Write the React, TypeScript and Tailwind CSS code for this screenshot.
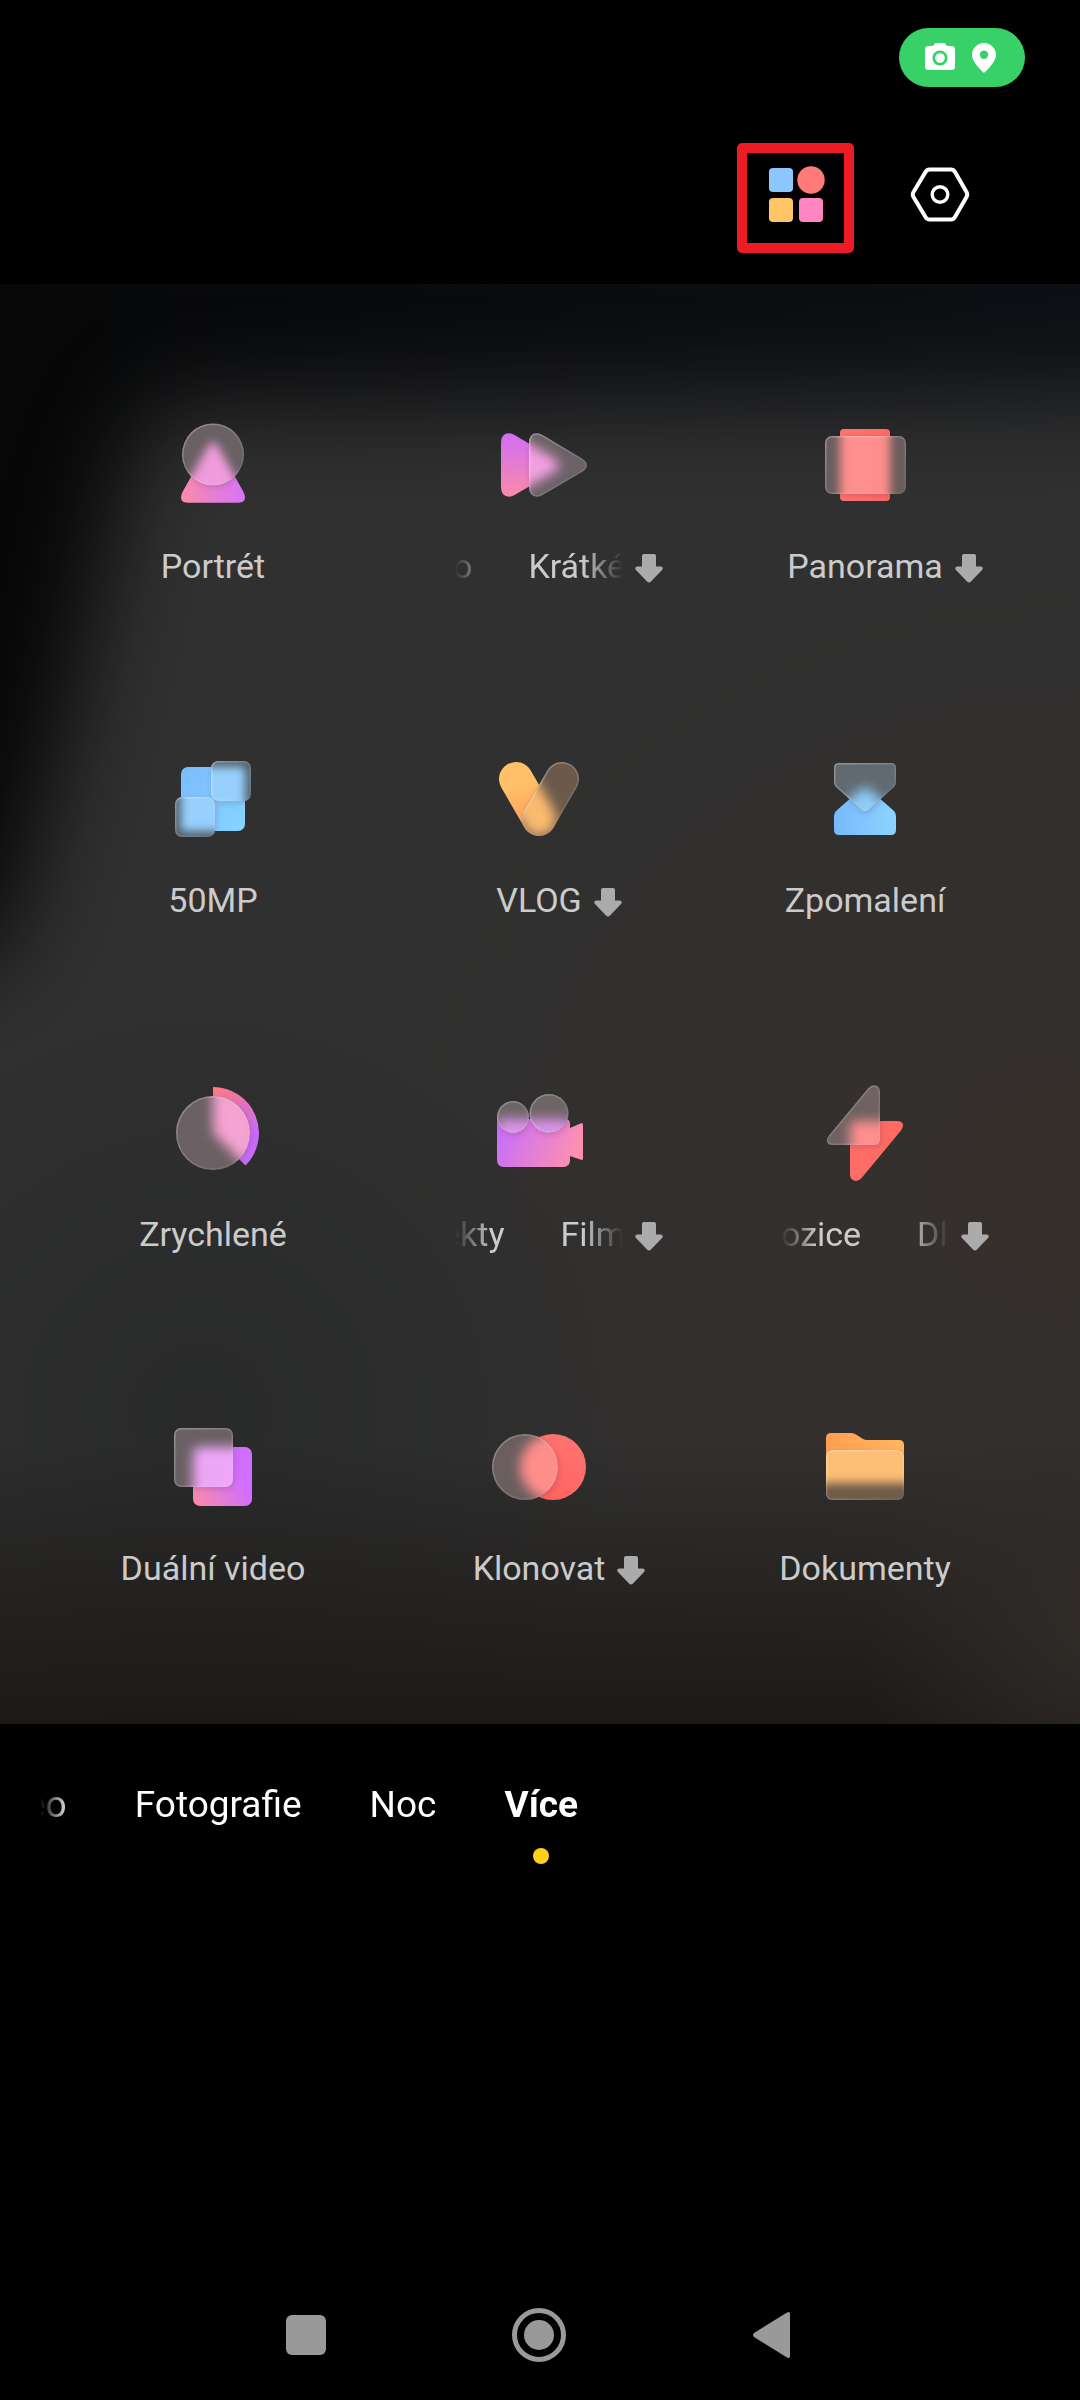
import { useId, useState, type ReactNode } from 'react';
import { MdCameraAlt } from 'react-icons/md';

type Mode = {
  id: string;
  icon: ReactNode;
  label?: string;
  // labels that are too long scroll; tail and head are the two visible ends
  marquee?: { tail: string; head: string; scroll: number };
  download?: boolean;
};

type GlassProps = {
  shape: ReactNode;
  under: ReactNode;
  tint: string;
  glow: string;
  blur?: number;
};

// Frosted shape: tinted base, blurred copy of what lies below, thin light rim
function Glass({ shape, under, tint, glow, blur = 6 }: GlassProps) {
  const id = useId().replace(/[^a-zA-Z0-9]/g, '');
  return (
    <>
      <defs>
        <clipPath id={`c${id}`}>{shape}</clipPath>
        <filter id={`b${id}`} x="-40%" y="-40%" width="180%" height="180%" colorInterpolationFilters="sRGB">
          <feGaussianBlur stdDeviation={blur} />
        </filter>
        <linearGradient id={`r${id}`} x1="0" y1="0" x2="1" y2="1">
          <stop offset="0" stopColor="#fff" stopOpacity="0.3" />
          <stop offset="1" stopColor="#fff" stopOpacity="0.03" />
        </linearGradient>
      </defs>
      <g fill={tint}>{shape}</g>
      <g clipPath={`url(#c${id})`}>
        <g fill={glow} filter={`url(#b${id})`}>{under}</g>
        <g fill="none" stroke={`url(#r${id})`} strokeWidth="3">{shape}</g>
      </g>
    </>
  );
}

type IconProps = {
  from: string;
  to: string;
  dir?: [number, number, number, number];
  under: ReactNode;
  glass: ReactNode[];
  tint: string;
  glow: string;
  blur?: number;
  glowShape?: ReactNode;
};

function ModeIcon({ from, to, dir = [0, 0, 1, 0], under, glass, tint, glow, blur, glowShape }: IconProps) {
  const id = useId().replace(/[^a-zA-Z0-9]/g, '');
  const [x1, y1, x2, y2] = dir;
  return (
    <svg viewBox="0 0 120 120" className="size-[120px]" aria-hidden="true">
      <defs>
        <linearGradient id={`g${id}`} gradientUnits="userSpaceOnUse" x1={x1 * 80 + 20} y1={y1 * 80 + 20} x2={x2 * 80 + 20} y2={y2 * 80 + 20}>
          <stop offset="0" stopColor={from} />
          <stop offset="1" stopColor={to} />
        </linearGradient>
        <clipPath id={`u${id}`}>{under}</clipPath>
        <filter id={`s${id}`} x="-40%" y="-40%" width="180%" height="180%">
          <feGaussianBlur stdDeviation="3" />
        </filter>
      </defs>
      <g fill={`url(#g${id})`}>{under}</g>
      {/* shade that the glass casts on the shape below */}
      <g clipPath={`url(#u${id})`}>
        <g fill="#5a2050" opacity="0.2" filter={`url(#s${id})`} transform="translate(1 2)">
          {glass.map((shape, i) => <g key={i}>{shape}</g>)}
        </g>
      </g>
      {glass.map((shape, i) => (
        <Glass key={i} shape={shape} under={glowShape ?? under} tint={tint} glow={glow} blur={blur} />
      ))}
    </svg>
  );
}

const boltPath =
  'M63 15.5Q67 11 71 12.5Q75 14 75 19V67Q75 72 70 72H27.5Q23 72 22 68.5Q21.5 66 24 62.5Z';
const playPath =
  'M50 38Q50 28.3 58 28.3Q61 28.3 64 30.2L103 53.5Q108 56.8 108 60.2Q108 63.8 103 67L64 89.8Q61 91.7 58 91.7Q50 91.7 50 82Z';

const modes: Mode[] = [
  {
    id: 'portrait',
    label: 'Portrét',
    icon: (
      <ModeIcon
        from="#ff8ea4" to="#d272ff" tint="#696164" glow="#f09bdc" blur={5}
        under={<path d="M54 43Q60 32 66 43L90.5 87Q95 97.7 85 97.7H35Q25 97.7 29.5 87Z" />}
        glass={[<circle cx="60" cy="49.5" r="31" />]}
      />
    ),
  },
  {
    id: 'short',
    marquee: { tail: 'o', head: 'Krátké', scroll: 2 },
    download: true,
    icon: (
      <ModeIcon
        from="#cb6aff" to="#ff8f9f" dir={[0, 0, 0, 1]} tint="#6b6266" glow="#f2a0e0"
        under={<path d={playPath} transform="translate(-28 0)" />}
        glass={[<path d={playPath} />]}
      />
    ),
  },
  {
    id: 'panorama',
    label: 'Panorama',
    download: true,
    icon: (
      <ModeIcon
        from="#ff7874" to="#ff6460" tint="#6a5e5f" glow="#ff8f8d" blur={5}
        under={<rect x="35" y="24" width="50" height="72" rx="4" />}
        glowShape={<rect x="35" y="4" width="50" height="112" />}
        glass={[<rect x="20" y="31" width="81" height="58" rx="7" />]}
      />
    ),
  },
  {
    id: '50mp',
    label: '50MP',
    icon: (
      <ModeIcon
        from="#78b9ff" to="#8ad8ff" dir={[0, 0, 1, 1]} tint="#54626c" glow="#97d0fd" blur={4}
        under={<rect x="28" y="28" width="64" height="64" rx="7" />}
        glowShape={<rect x="28" y="28" width="64" height="64" rx="4" />}
        glass={[
          <rect x="58" y="22" width="40" height="40" rx="7" />,
          <rect x="22" y="58" width="40" height="40" rx="7" />,
        ]}
      />
    ),
  },
  {
    id: 'vlog',
    label: 'VLOG',
    download: true,
    icon: (
      <ModeIcon
        from="#ffc068" to="#ff8a50" dir={[0.4, 0, 0.2, 0.8]} tint="#6b5a4c" glow="#f9bb70"
        under={<rect x="-17" y="-17" width="34" height="80" rx="17" transform="translate(37 40) rotate(-30)" />}
        glass={[<rect x="-17" y="-17" width="34" height="80" rx="17" transform="translate(83 40) rotate(30)" />]}
      />
    ),
  },
  {
    id: 'slow',
    label: 'Zpomalení',
    icon: (
      <ModeIcon
        from="#74b5ff" to="#8fd8ff" tint="#606a70" glow="#8ecbf8"
        under={<path d="M56 50Q60 46 64 50L89 72Q91 74 91 77V91Q91 96 86 96H34Q29 96 29 91V77Q29 74 31 72Z" />}
        glass={[<path d="M34 24H86Q91 24 91 29V43Q91 46 89 48L64 70.5Q60 74.5 56 70.5L31 48Q29 46 29 43V29Q29 24 34 24Z" />]}
      />
    ),
  },
  {
    id: 'timelapse',
    label: 'Zrychlené',
    icon: (
      <ModeIcon
        from="#ff7a84" to="#c86cf8" dir={[0.45, 0, 0.9, 0.6]} tint="#6b6164" glow="#f5a3d2"
        under={<path d="M60 60V14A46 46 0 0 1 92.5 92.5Z" />}
        glass={[<circle cx="60" cy="60" r="37" />]}
      />
    ),
  },
  {
    id: 'movie',
    marquee: { tail: 'ekty', head: 'Film', scroll: 13 },
    download: true,
    icon: (
      <ModeIcon
        from="#c46cff" to="#ff90b0" dir={[0, 0.3, 1, 0.7]} tint="#6e6567" glow="#d993e8"
        under={
          <path d="M18 46H86Q91 46 91 51V55L102 50.2Q104 49.6 104 52V85Q104 87.5 102 86.7L91 83V87Q91 94 84 94H25Q18 94 18 87Z" />
        }
        glass={[<circle cx="34" cy="44" r="16" />, <circle cx="70" cy="40.5" r="19.5" />]}
      />
    ),
  },
  {
    id: 'exposure',
    marquee: { tail: 'ozice', head: 'Dl', scroll: 0 },
    download: true,
    icon: (
      <ModeIcon
        from="#ff6a62" to="#ff6f6c" tint="#706163" glow="#fd8f8d"
        under={<path d={boltPath} transform="rotate(180 60 60)" />}
        glass={[<path d={boltPath} />]}
      />
    ),
  },
  {
    id: 'dual',
    label: 'Duální video',
    icon: (
      <ModeIcon
        from="#ff8e9e" to="#d06eff" dir={[0.2, 1, 0.9, 0.7]} tint="#6a6164" glow="#eda6f8"
        under={<rect x="40" y="40" width="59" height="59" rx="7" />}
        glass={[<rect x="21" y="21" width="59" height="59" rx="7" />]}
      />
    ),
  },
  {
    id: 'clone',
    label: 'Klonovat',
    download: true,
    icon: (
      <ModeIcon
        from="#ff6460" to="#ff7774" dir={[0.5, 0.8, 1, 0]} tint="#6b5e5f" glow="#ff8e8b"
        under={<circle cx="74" cy="60" r="33" />}
        glass={[<circle cx="46" cy="60" r="33" />]}
      />
    ),
  },
  {
    id: 'documents',
    label: 'Dokumenty',
    icon: (
      <ModeIcon
        from="#ff9d52" to="#ffb860" tint="#705c4b" glow="#fdbf76" blur={5}
        under={<path d="M26 26H46Q49 26 51 27.5L58 32Q60 33 62 33H94Q99 33 99 38V62H21V31Q21 26 26 26Z" />}
        glowShape={<rect x="4" y="26" width="112" height="50" />}
        glass={[<rect x="21" y="43" width="78" height="50" rx="6" />]}
      />
    ),
  },
];

function DownloadArrow() {
  return (
    <svg viewBox="0 0 28 30" className="absolute left-full top-[7px] ml-3 h-[30px] w-7" aria-hidden="true">
      <path
        d="M9 1H19Q21 1 21 3V13.5H26Q29 14.5 27 17L16 28.5Q14 30.5 12 28.5L1 17Q-1 14.5 2 13.5H7V3Q7 1 9 1Z"
        fill="#ababab"
      />
    </svg>
  );
}

function ModeButton({ mode }: { mode: Mode }) {
  return (
    <button type="button" className="flex flex-col items-center gap-[21px]">
      {mode.icon}
      <span className="relative text-[34px] leading-10 whitespace-nowrap text-[#cbcbcb]">
        {mode.marquee ? (
          <span className="block w-[168px] overflow-hidden mask-[linear-gradient(90deg,transparent,#000_36px,#000_calc(100%-40px),transparent)]">
            <span className="flex gap-14" style={{ marginLeft: -mode.marquee.scroll }}>
              <span>{mode.marquee.tail}</span>
              <span>{mode.marquee.head}</span>
            </span>
          </span>
        ) : (
          mode.label
        )}
        {mode.download && <DownloadArrow />}
      </span>
    </button>
  );
}

// Out-of-focus viewfinder behind the mode grid
function Viewfinder() {
  return (
    <svg
      viewBox="0 0 1080 1440"
      preserveAspectRatio="none"
      className="col-start-1 row-start-1 h-full w-full"
      aria-hidden="true"
    >
      <defs>
        <filter id="soft" x="-30%" y="-30%" width="160%" height="160%" colorInterpolationFilters="sRGB">
          <feGaussianBlur stdDeviation="46" />
        </filter>
        <radialGradient id="warm">
          <stop offset="0" stopColor="#3a2f26" stopOpacity="0.5" />
          <stop offset="1" stopColor="#3a2f26" stopOpacity="0" />
        </radialGradient>
        <radialGradient id="cool">
          <stop offset="0" stopColor="#272828" stopOpacity="0.8" />
          <stop offset="1" stopColor="#272828" stopOpacity="0" />
        </radialGradient>
        <linearGradient id="night" x1="0" y1="0" x2="1" y2="0">
          <stop offset="0" stopColor="#070707" />
          <stop offset="0.2" stopColor="#08090b" />
          <stop offset="1" stopColor="#0d1014" />
        </linearGradient>
        <linearGradient id="floor" x1="0" y1="0" x2="0" y2="1">
          <stop offset="0" stopColor="#191512" stopOpacity="0" />
          <stop offset="1" stopColor="#191512" stopOpacity="0.85" />
        </linearGradient>
        <radialGradient id="corner">
          <stop offset="0" stopColor="#322d29" stopOpacity="0.9" />
          <stop offset="1" stopColor="#322d29" stopOpacity="0" />
        </radialGradient>
      </defs>
      <rect width="1080" height="1440" fill="url(#night)" />
      <path d="M160 120L1300 110V1700H-200V710L0 670Q70 450 120 200Z" fill="#303030" filter="url(#soft)" />
      <ellipse cx="1080" cy="900" rx="700" ry="620" fill="url(#warm)" />
      <ellipse cx="200" cy="1130" rx="420" ry="420" fill="url(#cool)" />
      <rect y="1160" width="1080" height="280" fill="url(#floor)" />
      <ellipse cx="1100" cy="1340" rx="240" ry="260" fill="url(#corner)" />
    </svg>
  );
}

const tabs = ['Fotografie', 'Noc', 'Více'];

export default function App() {
  const [active, setActive] = useState('Více');

  return (
    <div className="flex min-h-screen flex-col bg-black font-[Roboto,sans-serif] text-white">
      <header className="flex flex-col gap-14 pt-7 pb-[31px]">
        {/* Privacy indicator */}
        <div className="mr-[55px] flex h-[59px] w-[126px] items-center justify-center gap-3.5 self-end rounded-full bg-[#38d167] pr-1.5">
          <MdCameraAlt className="size-9" />
          <svg viewBox="0 0 24 30" className="h-[30px] w-6" aria-hidden="true">
            <path
              fillRule="evenodd"
              d="M12 0C5.3 0 0 5.2 0 11.8C0 20 12 30 12 30S24 20 24 11.8C24 5.2 18.7 0 12 0ZM12 16A4.2 4.2 0 1 1 12 7.6A4.2 4.2 0 0 1 12 16Z"
              fill="currentColor"
            />
          </svg>
        </div>

        <div className="mr-[110px] flex items-center justify-end gap-14">
          <button
            type="button"
            aria-label="Režimy"
            className="flex h-[110px] w-[117px] items-center justify-center rounded-[5px] border-10 border-[#ed1c24] pb-2"
          >
            <svg viewBox="0 0 58 58" className="size-[58px]" aria-hidden="true">
              <rect x="2" y="3" width="24" height="24" rx="4" fill="#8dc6ff" />
              <circle cx="44" cy="15" r="13.7" fill="#ff7a79" />
              <rect x="2" y="33" width="24" height="24" rx="4" fill="#ffc668" />
              <rect x="32" y="33" width="24" height="24" rx="4" fill="#ff86c0" />
            </svg>
          </button>
          <button type="button" aria-label="Nastavení" className="pb-1.5">
            <svg viewBox="0 0 60 60" className="size-[60px]" fill="none" stroke="#fff" aria-hidden="true">
              <path
                d="M19.5 4.5H41Q43.5 4.5 45 7L56.5 27Q58 29.5 56.5 32L45 52Q43.5 54.5 41 54.5H19.5Q17 54.5 15.5 52L3.5 32Q2 29.5 3.5 27L15.5 7Q17 4.5 19.5 4.5Z"
                strokeWidth="4"
              />
              <circle cx="30" cy="29.5" r="7.8" strokeWidth="3.4" />
            </svg>
          </button>
        </div>
      </header>

      <main className="grid overflow-hidden">
        <Viewfinder />
        <div className="col-start-1 row-start-1 grid grid-cols-3 gap-y-[153px] pt-[121px] pr-[52px] pb-[136px] pl-[50px]">
          {modes.map(mode => (
            <ModeButton key={mode.id} mode={mode} />
          ))}
        </div>
      </main>

      <nav className="ml-10 flex items-start gap-[68px] overflow-hidden pt-[59px] text-[37px] leading-11 whitespace-nowrap mask-[linear-gradient(90deg,transparent,#000_30px)]">
        <button type="button" aria-label="Video" className="-ml-3.5">eo</button>
        {tabs.map(tab => (
          <button
            key={tab}
            type="button"
            onClick={() => setActive(tab)}
            className={`flex flex-col items-center gap-[21px] ${tab === active ? 'font-bold' : ''}`}
          >
            {tab}
            {tab === active && <span className="size-4 rounded-full bg-[#ffcf1a]" />}
          </button>
        ))}
      </nav>

      <footer className="mt-auto flex justify-center gap-[173px] pr-0.5 pb-[35px] text-[#999]">
        <button type="button" aria-label="Poslední aplikace" className="flex size-[60px] items-center justify-center">
          <span className="size-10 rounded-md bg-current" />
        </button>
        <button type="button" aria-label="Domů">
          <svg viewBox="0 0 60 60" className="size-[60px]" aria-hidden="true">
            <circle cx="30" cy="30" r="24.5" fill="none" stroke="currentColor" strokeWidth="5" />
            <circle cx="30" cy="30" r="15" fill="currentColor" />
          </svg>
        </button>
        <button type="button" aria-label="Zpět">
          <svg viewBox="0 0 60 60" className="size-[60px]" aria-hidden="true">
            <path d="M12 28L45 7.5Q48 6 48 9V51Q48 54 45 52.5L12 32Q10 30 12 28Z" fill="currentColor" />
          </svg>
        </button>
      </footer>
    </div>
  );
}
